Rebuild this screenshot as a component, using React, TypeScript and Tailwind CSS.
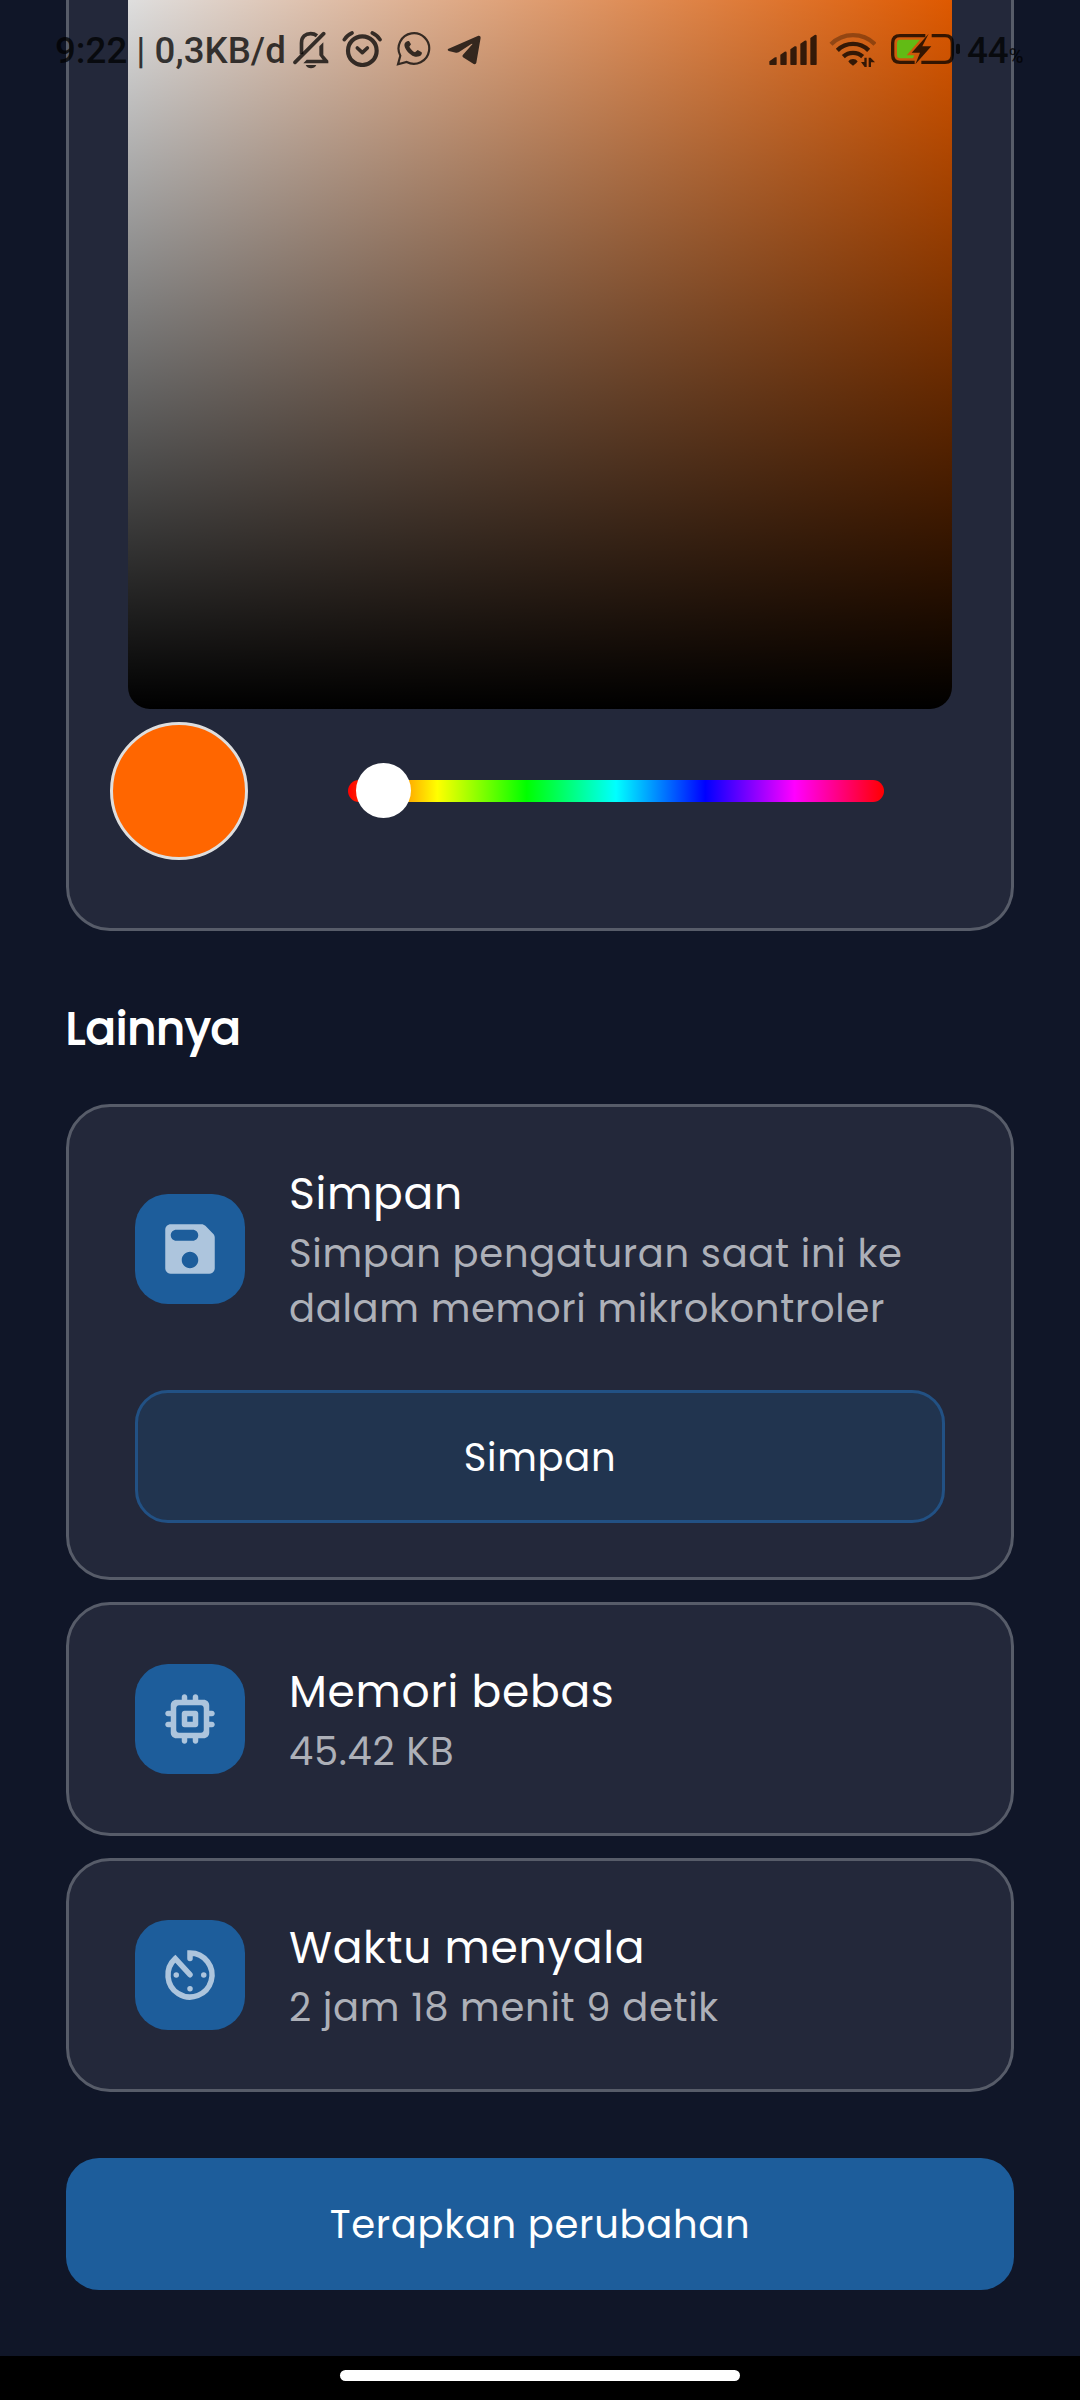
import type { ReactNode } from "react";

function BellOff() {
  return (
    <svg viewBox="40 32 108 114" className="h-[38px] w-[36px]" fill="currentColor">
      <path d="M46 126L132 40" stroke="currentColor" strokeWidth="11" strokeLinecap="round" />
      <path d="M65.500 102V68C65.500 49 78 40 93 40Q104 40 112 46" fill="none" stroke="currentColor" strokeWidth="11" />
      <path d="M131 66V104L146 121V129H71L81 118H129L119 105V78Z" />
      <path d="M78 134H110Q105 144 94 144Q83 144 78 134Z" />
    </svg>
  );
}

function Alarm() {
  return (
    <svg viewBox="187 32 120 108" className="h-[36px] w-[40px]" fill="none" stroke="currentColor" strokeLinecap="round">
      <circle cx="248" cy="91" r="43" strokeWidth="12.500" />
      <path d="M194 58Q201 45 217 38M278 38Q294 45 301 58" strokeWidth="11" />
      <path d="M233 83L248 97L263 83" strokeWidth="11" strokeLinejoin="round" />
    </svg>
  );
}

function WhatsApp() {
  return (
    <svg viewBox="350 36 105 102" className="h-[34px] w-[35px]">
      <path d="M356 133L363 107A46 46 0 1 1 382 126Z" fill="none" stroke="currentColor" strokeWidth="6.500" />
      <path d="M380 66C374 70 373 78 381 90C391 104 405 114 420 109C427 106 429 101 427 97L415 90L407 97C400 94 394 87 390 80L395 73L389 63Q384 62 380 66Z" fill="currentColor" />
    </svg>
  );
}

function Telegram() {
  return (
    <svg viewBox="501 45 105 90" className="h-[30px] w-[35px]" fill="currentColor">
      <path d="M504 87L595 47Q602 46 602 53L589 128Q586 134 581 132L549 112Q545 108 549 104L577 73Q578 70 574 72L536 97Q532 99 528 98L506 93Q501 90 504 87Z" />
    </svg>
  );
}

function Signal() {
  return (
    <svg viewBox="27 42 144 93" className="h-[31px] w-[48px]" fill="currentColor">
      <path d="M28 124L45 112H50V133Q50 135 48 135H30Q28 135 28 133ZM61 104L74 95Q80 94 80 98V133Q80 135 78 135H63Q61 135 61 133ZM91 88L104 79Q110 77 110 82V133Q110 135 108 135H93Q91 135 91 133ZM121 71L134 62Q140 60 140 65V133Q140 135 138 135H123Q121 135 121 133ZM151 54L164 45Q170 42 170 48V133Q170 135 168 135H153Q151 135 151 133Z" />
    </svg>
  );
}

function Wifi() {
  return (
    <svg viewBox="207 36 141 108" className="h-[36px] w-[47px]" fill="none" stroke="currentColor" strokeWidth="13">
      <path d="M213 73A93 93 0 0 1 345 73" opacity="0.4" />
      <path d="M232 91A67 67 0 0 1 326 91" />
      <path d="M250 110A42 42 0 0 1 308 110" />
      <path d="M265 124Q270 117 279 117T293 124Q291 130 279 137Q267 130 265 124Z" fill="currentColor" stroke="none" />
      <path d="M313 113H320V141H314L303 126H313ZM326 113H332L345 127H333V141H326Z" fill="currentColor" stroke="none" />
    </svg>
  );
}

function Battery() {
  return (
    <svg viewBox="390 39 213 96" className="h-[32px] w-[71px]" fill="currentColor">
      <path d="M421 59H480L440 106H463L459 115H421Q411 115 411 105V69Q411 59 421 59Z" fill="#62bb15" />
      <path d="M496 47H420Q398 47 398 69V105Q398 127 420 127H464M515 47H555Q577 47 577 69V105Q577 127 555 127H484" fill="none" stroke="currentColor" strokeWidth="10" />
      <path d="M506 41L455 98H480L466 133L514 79H487Z" />
      <rect x="588" y="71" width="12" height="31" rx="5" />
    </svg>
  );
}

function StatusBar() {
  return (
    <header className="absolute inset-x-0 top-0 h-[98px] font-['Roboto',sans-serif] text-black/75">
      <div className="flex items-start pl-[55px] pr-[56px]">
        <span className="mt-[28.5px] w-[238px] whitespace-pre text-[36.7px] leading-[44px] font-medium">9:22 | 0,3KB/d</span>
        <div className="mt-[31px]"><BellOff /></div>
        <div className="mt-[31px] ml-[13px]"><Alarm /></div>
        <div className="mt-[32px] ml-[14px]"><WhatsApp /></div>
        <div className="mt-[35px] ml-[16px]"><Telegram /></div>
        <div className="mt-[34px] ml-auto"><Signal /></div>
        <div className="mt-[32px] ml-[12px]"><Wifi /></div>
        <div className="mt-[33px] ml-[14px]"><Battery /></div>
        <div className="mt-[28.5px] ml-[6px] flex w-[57px] items-baseline whitespace-nowrap leading-[44px]">
          <span className="text-[36.7px] font-medium">44</span>
          <span className="text-[20px] leading-none font-medium">%</span>
        </div>
      </div>
    </header>
  );
}

function ColorCard() {
  return (
    <section className="h-[931px] shrink-0 rounded-b-[44px] border-3 border-t-0 border-[#575c69] bg-[#23283a]">
      <div className="mx-[59px] h-[709px] rounded-b-[22px] bg-[linear-gradient(to_bottom,rgba(0,0,0,0.13),#000),linear-gradient(to_right,#fff,#ff6600)]" />
      <div className="mt-[13px] flex items-center pl-[41px]">
        <div className="size-[138px] rounded-full border-3 border-[#dedede] bg-[#ff6600]" />
        <div className="relative ml-[100px] h-[22px] w-[536px] rounded-full bg-[linear-gradient(to_right,#f00,#ff0,#0f0,#0ff,#00f,#f0f,#f00)]">
          <div className="absolute top-[-17px] left-[8px] size-[55px] rounded-full bg-white" />
        </div>
      </div>
    </section>
  );
}

function Tile({ icon }: { icon: ReactNode }) {
  return (
    <div className="flex size-[110px] shrink-0 items-center justify-center rounded-[33px] bg-[#1d5d9b] text-[#adc5dd]">
      <svg viewBox="0 0 24 24" className="size-[66px]" fill="currentColor">{icon}</svg>
    </div>
  );
}

function Item({ icon, title, children }: { icon: ReactNode; title: string; children: ReactNode }) {
  return (
    <div className="flex items-center gap-[44px]">
      <Tile icon={icon} />
      <div>
        <h3 className="text-[44px] leading-[66px] tracking-[0.7px] text-white">{title}</h3>
        <p className="-mt-px mb-px text-[38.5px] leading-[55px] tracking-[0.7px] text-[#adb0b8]">{children}</p>
      </div>
    </div>
  );
}

function Card({ className, children }: { className: string; children: ReactNode }) {
  return (
    <section className={"flex shrink-0 flex-col justify-center rounded-[44px] border-3 border-[#575c69] bg-[#23283a] px-[66px] " + className}>
      {children}
    </section>
  );
}

const saveIcon = (
  <path d="M17.59 3.59c-.38-.38-.89-.59-1.42-.59H5c-1.11 0-2 .9-2 2v14c0 1.1.9 2 2 2h14c1.1 0 2-.9 2-2V7.83c0-.53-.21-1.04-.59-1.41l-2.82-2.83zM12 19c-1.66 0-3-1.34-3-3s1.34-3 3-3 3 1.34 3 3-1.34 3-3 3zm1-10H7c-1.1 0-2-.9-2-2s.9-2 2-2h6c1.1 0 2 .9 2 2s-.9 2-2 2z" />
);

const memoryIcon = (
  <path d="M14 9h-4c-.55 0-1 .45-1 1v4c0 .55.45 1 1 1h4c.55 0 1-.45 1-1v-4c0-.55-.45-1-1-1zm-1 4h-2v-2h2v2zm8-3c0-.55-.45-1-1-1h-1V7c0-1.1-.9-2-2-2h-2V4c0-.55-.45-1-1-1s-1 .45-1 1v1h-2V4c0-.55-.45-1-1-1s-1 .45-1 1v1H7c-1.1 0-2 .9-2 2v2H4c-.55 0-1 .45-1 1s.45 1 1 1h1v2H4c-.55 0-1 .45-1 1s.45 1 1 1h1v2c0 1.1.9 2 2 2h2v1c0 .55.45 1 1 1s1-.45 1-1v-1h2v1c0 .55.45 1 1 1s1-.45 1-1v-1h2c1.1 0 2-.9 2-2v-2h1c.55 0 1-.45 1-1s-.45-1-1-1h-1v-2h1c.55 0 1-.45 1-1zm-5 7H8c-.55 0-1-.45-1-1V8c0-.55.45-1 1-1h8c.55 0 1 .45 1 1v8c0 .55-.45 1-1 1z" />
);

const timerIcon = (
  <>
    <path d="M12 6V4A8 8 0 1 1 6.65 6.05L12 11.9" fill="none" stroke="currentColor" strokeWidth="2" strokeLinecap="round" strokeLinejoin="miter" />
    <circle cx="7" cy="12" r="1" />
    <circle cx="17" cy="12" r="1" />
    <circle cx="12" cy="17" r="1" />
  </>
);

export default function App() {
  return (
    <div className="relative flex h-[2400px] w-[1080px] flex-col overflow-hidden bg-[#101628] font-['Poppins','Inter',sans-serif]">
      <main className="flex h-[2356px] shrink-0 flex-col px-[66px]">
        <ColorCard />
        <h2 className="mt-[65px] mb-[42px] text-[44px] leading-[66px] tracking-[0.7px] text-white [-webkit-text-stroke:1.8px_white]">Lainnya</h2>
        <div className="flex flex-col gap-[22px]">
          <Card className="h-[476px]">
            <Item icon={saveIcon} title="Simpan">
              Simpan pengaturan saat ini ke
              <br />
              dalam memori mikrokontroler
            </Item>
            <button className="mt-[53px] h-[133px] w-full rounded-[33px] border-3 border-[#225184] bg-[#21344f] pt-[2px] text-[38.5px] tracking-[0.7px] text-white">
              Simpan
            </button>
          </Card>
          <Card className="h-[234px]">
            <Item icon={memoryIcon} title="Memori bebas">45.42 KB</Item>
          </Card>
          <Card className="h-[234px]">
            <Item icon={timerIcon} title="Waktu menyala">2 jam 18 menit 9 detik</Item>
          </Card>
        </div>
        <button className="mt-[66px] h-[132px] w-full rounded-[33px] bg-[#1d5d9b] pt-[1px] text-[38.5px] tracking-[0.7px] text-white">
          Terapkan perubahan
        </button>
      </main>
      <footer className="flex h-[44px] shrink-0 justify-center bg-black pt-[14px]">
        <div className="h-[11px] w-[400px] rounded-full bg-white" />
      </footer>
      <StatusBar />
    </div>
  );
}
